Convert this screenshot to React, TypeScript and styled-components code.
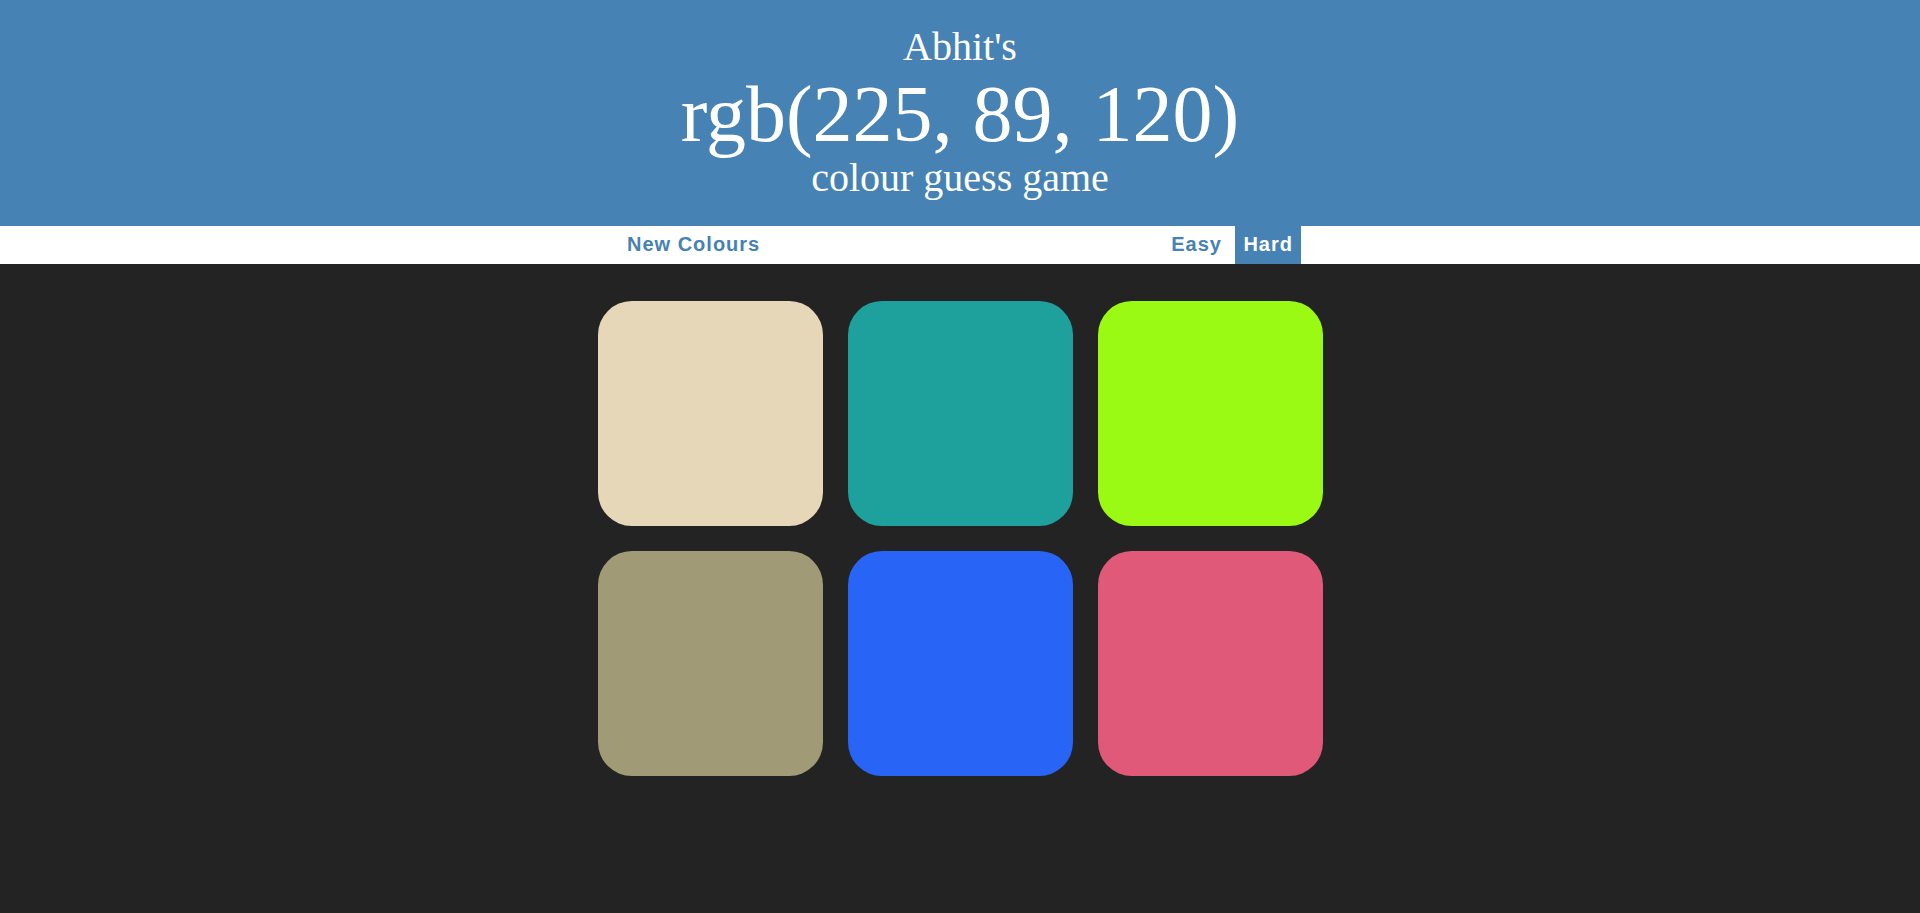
import React from "react";
import styled, { createGlobalStyle } from "styled-components";

const GlobalStyle = createGlobalStyle`
  html, body {
    margin: 0;
    padding: 0;
    background: #232323;
    min-height: 100%;
  }
  body {
    font-family: "Liberation Sans", Arial, sans-serif;
  }
`;

const Page = styled.div`
  min-height: 913px;
  background: #232323;
`;

const Header = styled.h1`
  margin: 0;
  box-sizing: border-box;
  height: 226px;
  padding-top: 23.5px;
  background: #4682b4;
  color: #ffffff;
  text-align: center;
  font-family: "Liberation Serif", "Times New Roman", serif;
  font-weight: normal;
`;

const HeaderLine = styled.div<{ $size: number; $lh: number }>`
  font-size: ${(p) => p.$size}px;
  line-height: ${(p) => p.$lh}px;
`;

const Stripe = styled.div`
  height: 38px;
  background: #ffffff;
`;

const StripeInner = styled.div`
  width: 682px;
  height: 100%;
  margin: 0 auto;
  display: flex;
  justify-content: space-between;
  align-items: stretch;
`;

const Modes = styled.div`
  display: flex;
  gap: 5.5px;
`;

const Button = styled.button<{ $selected?: boolean }>`
  border: none;
  margin: 0;
  padding: 0 8px 2px;
  height: 100%;
  background: ${(p) => (p.$selected ? "#4682b4" : "transparent")};
  color: ${(p) => (p.$selected ? "#ffffff" : "#4682b4")};
  font-family: "Liberation Sans", Arial, sans-serif;
  font-weight: 700;
  font-size: 20px;
  letter-spacing: 1px;
  line-height: 34px;
  cursor: pointer;
  outline: none;
`;

const Grid = styled.div`
  display: grid;
  grid-template-columns: repeat(3, 225px);
  gap: 25px;
  justify-content: center;
  padding-top: 37px;
`;

const Square = styled.div<{ $color: string }>`
  width: 225px;
  height: 225px;
  border-radius: 15%;
  background: ${(p) => p.$color};
`;

const colors = [
  "rgb(230, 215, 184)",
  "rgb(30, 160, 156)",
  "rgb(154, 250, 20)",
  "rgb(160, 154, 118)",
  "rgb(40, 100, 245)",
  "rgb(225, 89, 120)",
];

export default function App() {
  return (
    <Page>
      <GlobalStyle />
      <Header>
        <HeaderLine $size={40} $lh={46}>Abhit's</HeaderLine>
        <HeaderLine $size={80} $lh={88}>rgb(225, 89, 120)</HeaderLine>
        <HeaderLine $size={40} $lh={40}>colour guess game</HeaderLine>
      </Header>
      <Stripe>
        <StripeInner>
          <Button>New Colours</Button>
          <Modes>
            <Button>Easy</Button>
            <Button $selected>Hard</Button>
          </Modes>
        </StripeInner>
      </Stripe>
      <Grid>
        {colors.map((c, i) => (
          <Square key={i} $color={c} />
        ))}
      </Grid>
    </Page>
  );
}
